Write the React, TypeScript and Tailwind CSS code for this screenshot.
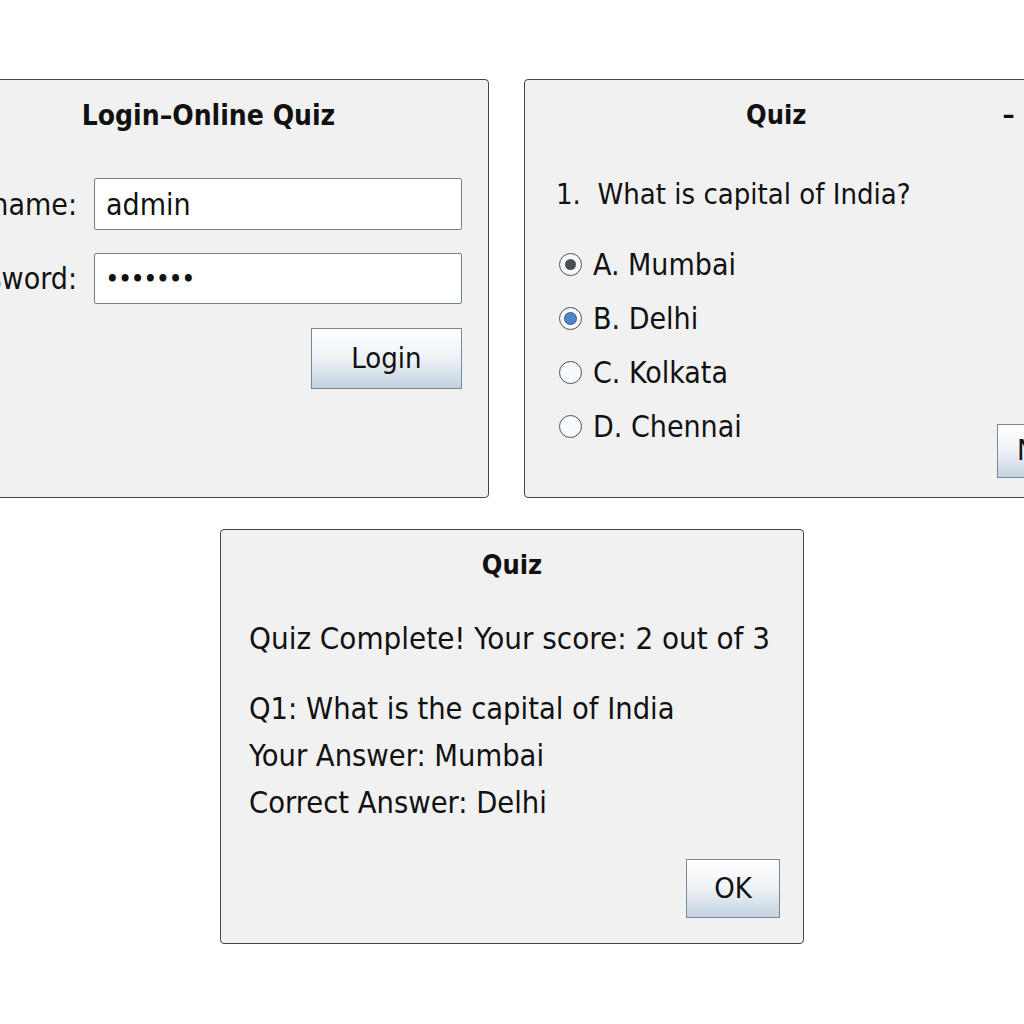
import React from 'react';

const font = { fontFamily: '"DejaVu Sans Condensed", "DejaVu Sans", sans-serif' };

function Radio({ state }: { state: 'dark' | 'blue' | 'off' }) {
  return (
    <span className="flex h-[23px] w-[23px] shrink-0 items-center justify-center rounded-full border-[1.5px] border-[#4e5154] bg-[#f7fafd]">
      {state === 'dark' && <span className="h-[11px] w-[11px] rounded-full bg-[#4b4f55]" />}
      {state === 'blue' && <span className="h-[11px] w-[11px] rounded-full bg-[#4f86c8] ring-1 ring-[#3a5f8c]" />}
    </span>
  );
}

function SwingButton({ label, className }: { label: string; className: string }) {
  return (
    <button
      className={`flex items-center border border-[#77889a] bg-gradient-to-b from-[#ffffff] via-[#eef2f6] to-[#c4d2e0] text-[29px] text-[#111] ${className}`}
    >
      {label}
    </button>
  );
}

export default function App() {
  const options: { label: string; state: 'dark' | 'blue' | 'off' }[] = [
    { label: 'A. Mumbai', state: 'dark' },
    { label: 'B. Delhi', state: 'blue' },
    { label: 'C. Kolkata', state: 'off' },
    { label: 'D. Chennai', state: 'off' },
  ];

  return (
    <div className="h-[1024px] w-[1024px] overflow-hidden bg-white text-[#111]" style={font}>
      {/* Top row */}
      <div className="flex gap-[35px] pt-[79px]">
        {/* Login window */}
        <div className="-ml-[72px] flex h-[419px] w-[561px] shrink-0 flex-col rounded-[4px] border border-[#444] bg-[#f1f1f1]">
          <div className="mt-[20px] text-center text-[28px] font-bold leading-[32px] whitespace-pre">Login–Online Quiz</div>

          <div className="mt-[46px] flex items-center pr-[26px]">
            <span className="w-[148px] shrink-0 text-right text-[30px] whitespace-nowrap">Username:</span>
            <div className="ml-[17px] flex h-[52px] flex-1 items-center rounded-[2px] border-[1.5px] border-[#70808f] bg-white pl-[11px] text-[30px]">
              admin
            </div>
          </div>

          <div className="mt-[23px] flex items-center pr-[26px]">
            <span className="w-[148px] shrink-0 text-right text-[30px] whitespace-nowrap">Password:</span>
            <div className="ml-[17px] flex h-[51px] flex-1 items-center rounded-[2px] border-[1.5px] border-[#70808f] bg-white pl-[11px] text-[22px] font-bold">
              •••••••
            </div>
          </div>

          <div className="mt-[24px] flex justify-end pr-[26px]">
            <SwingButton label="Login" className="h-[61px] w-[151px] justify-center" />
          </div>
        </div>

        {/* Question window */}
        <div className="flex h-[419px] w-[620px] shrink-0 flex-col rounded-[4px] border border-[#444] bg-[#f1f1f1]">
          <div className="mt-[19px] flex items-center pl-[221px] leading-[32px]">
            <span className="text-[27px] font-bold">Quiz</span>
            <span className="ml-[196px] text-[27px] font-bold">–</span>
          </div>

          <div className="mt-[45px] pl-[31px] text-[29px] leading-[36px] whitespace-pre">1.  What is capital of India?</div>

          <div className="mt-[34px] flex">
            <div className="flex w-[472px] shrink-0 flex-col gap-[17px] pl-[34px]">
              {options.map((o) => (
                <label key={o.label} className="flex h-[37px] items-center gap-[11px]">
                  <Radio state={o.state} />
                  <span className="text-[30px] whitespace-pre">{o.label}</span>
                </label>
              ))}
            </div>
            <div className="mt-[178px]">
              <SwingButton label="Next" className="h-[54px] w-[120px] justify-start pl-[19px]" />
            </div>
          </div>
        </div>
      </div>

      {/* Result window */}
      <div className="mt-[31px] pl-[220px]">
        <div className="flex h-[415px] w-[584px] flex-col rounded-[4px] border border-[#444] bg-[#f1f1f1] pb-[25px]">
          <div className="mt-[19px] text-center text-[27px] font-bold leading-[32px]">Quiz</div>

          <div className="mt-[39px] pl-[28px] text-[31px] leading-[36px]">Quiz Complete! Your score: 2 out of 3</div>

          <div className="mt-[35px] flex flex-col gap-[11px] pl-[28px] text-[30.5px] leading-[36px]">
            <div>Q1: What is the capital of India</div>
            <div>Your Answer: Mumbai</div>
            <div>Correct Answer: Delhi</div>
          </div>

          <div className="mt-auto flex justify-end pr-[23px]">
            <SwingButton label="OK" className="h-[59px] w-[94px] justify-center" />
          </div>
        </div>
      </div>
    </div>
  );
}
